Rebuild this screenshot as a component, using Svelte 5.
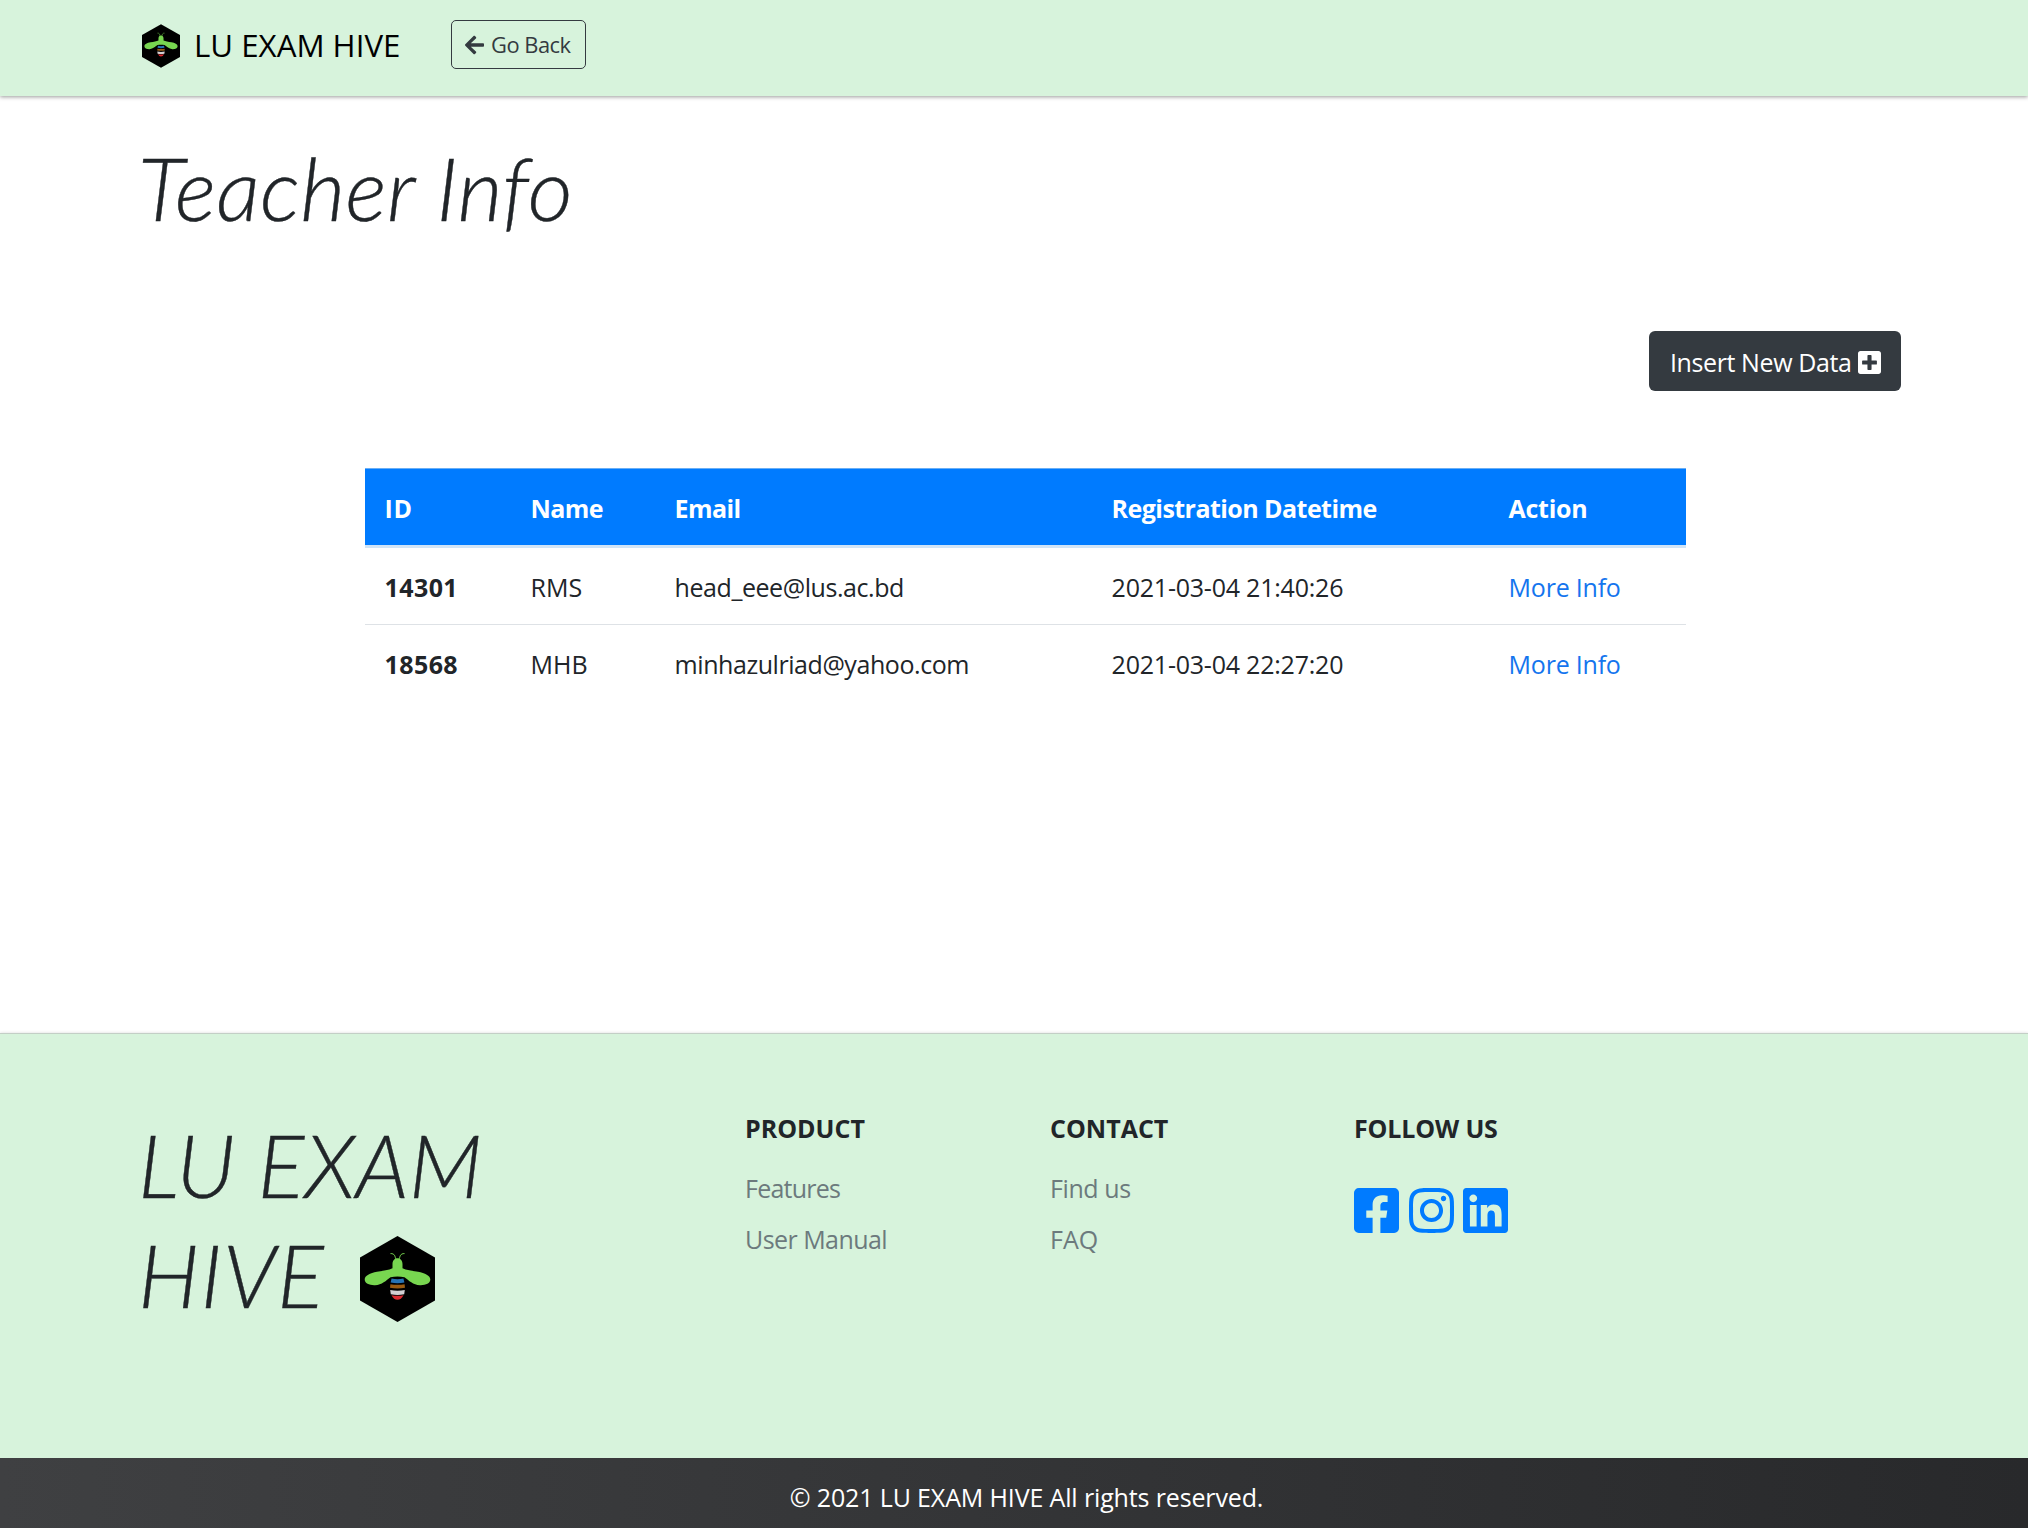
<script>
  const teachers = [
    { id: '14301', name: 'RMS', email: 'head_eee@lus.ac.bd', registered: '2021-03-04 21:40:26' },
    { id: '18568', name: 'MHB', email: 'minhazulriad@yahoo.com', registered: '2021-03-04 22:27:20' }
  ];
</script>

{#snippet bee()}
  <svg class="bee" viewBox="0 0 75 86" aria-hidden="true">
    <path d="M37.5 0 75 21.5V64.5L37.5 86 0 64.5V21.5Z" fill="#000" />
    <g fill="none" stroke="#78d650" stroke-width="1">
      <path d="M35.8 24C35.2 20 34.5 17.4 30.5 17.6" />
      <path d="M39.2 24C39.8 20 40.5 17.4 44.5 17.6" />
    </g>
    <path
      fill="#78d650"
      d="M37.5 22.3C40.7 22.3 42.4 25 42.5 28V32.2C46 34 52 34.6 58 35.8C65 37.2 70.3 39.5 70.3 43.6C70.3 47.5 65.5 49.4 60 49.2C53 48.8 49 44.5 44.500 41.2C40 40.4 35 40.4 30.5 41.2C26 44.5 22 48.8 15 49.2C9.500 49.4 4.700 47.5 4.700 43.6C4.700 39.5 10 37.2 17 35.8C23 34.6 29 34 32.5 32.2V28C32.6 25 34.3 22.3 37.5 22.3Z"
    />
    <path d="M31.6 42.600Q37.5 44 43.4 42.600L44.4 46.6Q37.5 47.8 30.6 46.6Z" fill="#2573b5" />
    <path d="M30.4 48.2Q37.5 49.4 44.6 48.2L45 51.8Q37.5 53.2 30 51.8Z" fill="#9a5c12" />
    <path d="M30.2 54Q37.5 55.4 44.8 54L44.2 58.2Q37.5 59.6 30.8 58.2Z" fill="#d2cfd2" />
    <path d="M31.5 59.2Q37.5 60.4 43.5 59.2Q41.2 63.8 37.5 63.8Q33.8 63.8 31.5 59.2Z" fill="#da2a30" />
  </svg>
{/snippet}

<div class="page">
  <header>
    <a class="brand" href="#home">{@render bee()}<span>LU EXAM HIVE</span></a>
    <a class="back" href="#back">
      <svg viewBox="0 0 448 512" aria-hidden="true"><path fill="currentColor" d="M257.5 445.1l-22.2 22.2c-9.4 9.4-24.6 9.4-33.9 0L7 273c-9.4-9.4-9.4-24.6 0-33.9L201.4 44.7c9.4-9.4 24.6-9.4 33.9 0l22.2 22.2c9.5 9.5 9.3 25-.4 34.3L136.6 216H424c13.3 0 24 10.7 24 24v32c0 13.3-10.7 24-24 24H136.6l120.5 114.8c9.8 9.3 10 24.8.4 34.3z" /></svg>
      <span>Go Back</span>
    </a>
  </header>

  <main>
    <h1>Teacher Info</h1>
    <div class="toolbar">
      <a class="insert" href="#insert">
        <span>Insert New Data</span>
        <svg viewBox="0 32 448 448" aria-hidden="true"><path fill="currentColor" d="M400 32H48C21.500 32 0 53.500 0 80v352c0 26.500 21.500 48 48 48h352c26.500 0 48-21.500 48-48V80c0-26.500-21.500-48-48-48zm-32 252c0 6.600-5.400 12-12 12h-92v92c0 6.600-5.400 12-12 12h-56c-6.600 0-12-5.400-12-12v-92H92c-6.600 0-12-5.400-12-12v-56c0-6.600 5.400-12 12-12h92v-92c0-6.600 5.400-12 12-12h56c6.600 0 12 5.400 12 12v92h92c6.600 0 12 5.400 12 12v56z" /></svg>
      </a>
    </div>
    <table>
      <thead>
        <tr>
          <th class="c-id">ID</th>
          <th class="c-name">Name</th>
          <th class="c-email">Email</th>
          <th class="c-date">Registration Datetime</th>
          <th class="c-action">Action</th>
        </tr>
      </thead>
      <tbody>
        {#each teachers as t}
          <tr>
            <td class="id">{t.id}</td>
            <td class="name">{t.name}</td>
            <td class="email">{t.email}</td>
            <td class="date">{t.registered}</td>
            <td class="more"><a href="#more">More Info</a></td>
          </tr>
        {/each}
      </tbody>
    </table>
  </main>

  <footer>
    <div class="columns">
      <div class="logo">
        <div>LU EXAM</div>
        <div class="second"><span>HIVE</span>{@render bee()}</div>
      </div>
      <nav>
        <h2>PRODUCT</h2>
        <a class="features" href="#features">Features</a>
        <a class="manual" href="#manual">User Manual</a>
      </nav>
      <nav>
        <h2>CONTACT</h2>
        <a class="find" href="#find">Find us</a>
        <a href="#faq">FAQ</a>
      </nav>
      <div class="follow">
        <h2>FOLLOW US</h2>
        <div class="social">
          <svg viewBox="0 32 448 448" role="img" aria-label="Facebook"><path fill="currentColor" d="M400 32H48A48 48 0 0 0 0 80v352a48 48 0 0 0 48 48h137.250V327.690h-63V256h63v-54.640c0-62.150 37-96.480 93.670-96.480 27.140 0 55.520 4.840 55.520 4.840v61h-31.270c-30.810 0-40.420 19.120-40.420 38.730V256h68.780l-11 71.690h-57.780V480H400a48 48 0 0 0 48-48V80a48 48 0 0 0-48-48z" /></svg>
          <svg viewBox="0 32 448 448" role="img" aria-label="Instagram"><path fill="currentColor" d="M224.100 141c-63.600 0-114.900 51.300-114.900 114.900s51.300 114.900 114.900 114.900S339 319.500 339 255.900 287.700 141 224.100 141zm0 189.600c-41.100 0-74.700-33.500-74.700-74.700s33.500-74.700 74.700-74.700 74.700 33.500 74.700 74.700-33.600 74.700-74.700 74.700zm146.400-194.300c0 14.900-12 26.800-26.800 26.800-14.900 0-26.800-12-26.800-26.800s12-26.800 26.800-26.800 26.800 12 26.800 26.800zm76.100 27.200c-1.700-35.900-9.900-67.700-36.200-93.900-26.200-26.200-58-34.400-93.900-36.200-37-2.100-147.900-2.100-184.900 0-35.800 1.700-67.600 9.900-93.900 36.100s-34.400 58-36.200 93.900c-2.100 37-2.100 147.900 0 184.900 1.700 35.900 9.900 67.700 36.200 93.900s58 34.400 93.900 36.200c37 2.100 147.900 2.100 184.900 0 35.900-1.700 67.700-9.900 93.900-36.200 26.200-26.200 34.400-58 36.200-93.900 2.100-37 2.100-147.800 0-184.800zM398.800 388c-7.800 19.600-22.900 34.700-42.600 42.600-29.500 11.700-99.500 9-132.100 9s-102.700 2.600-132.100-9c-19.600-7.800-34.700-22.900-42.600-42.600-11.700-29.500-9-99.500-9-132.100s-2.600-102.700 9-132.100c7.800-19.600 22.900-34.700 42.600-42.600 29.500-11.700 99.500-9 132.100-9s102.700-2.600 132.100 9c19.600 7.800 34.700 22.900 42.600 42.600 11.700 29.500 9 99.500 9 132.100s2.700 102.700-9 132.100z" /></svg>
          <svg viewBox="0 32 448 448" role="img" aria-label="LinkedIn"><path fill="currentColor" d="M416 32H31.900C14.300 32 0 46.500 0 64.300v383.400C0 465.500 14.300 480 31.900 480H416c17.600 0 32-14.500 32-32.300V64.300c0-17.800-14.400-32.300-32-32.300zM135.400 416H69V202.200h66.500V416zm-33.200-243c-21.300 0-38.500-17.300-38.500-38.500S80.900 96 102.200 96c21.200 0 38.500 17.300 38.500 38.500 0 21.300-17.200 38.500-38.500 38.500zm282.100 243h-66.400V312c0-24.800-.5-56.700-34.500-56.700-34.600 0-39.900 27-39.900 54.900V416h-66.400V202.200h63.700v29.200h.9c8.900-16.800 30.600-34.500 62.900-34.500 67.200 0 79.700 44.300 79.700 101.900V416z" /></svg>
        </div>
      </div>
    </div>
    <div class="copyright">© 2021 LU EXAM HIVE All rights reserved.</div>
  </footer>
</div>

<style>
  :global(body) { margin: 0; background: #fff; }
  .page {
    display: flex;
    flex-direction: column;
    height: 1528px;
    overflow: hidden;
    font: 25px/38px 'Open Sans', 'Noto Sans', sans-serif;
    color: #212529;
  }
  .page * { box-sizing: border-box; }
  a { color: inherit; text-decoration: none; }
  svg { display: block; flex: none; }

  header {
    display: flex;
    align-items: flex-start;
    height: 96px;
    padding: 20px 142px 0;
    background: #d7f3dc;
    box-shadow: 0 1px 4px rgba(0, 0, 0, 0.4);
    flex: none;
  }
  .brand { display: flex; width: 309px; color: #000; font-size: 31.25px; line-height: 48px; }
  .brand .bee { width: 38px; height: 44px; margin: 4px 14px 0 0; }
  .brand span { margin-top: 1px; }
  .back {
    display: flex;
    width: 135px;
    height: 49px;
    padding: 0 0 0 13px;
    border: 1px solid #343a40;
    border-radius: 5px;
    color: #343a40;
    font-size: 21.9px;
    line-height: 47px;
    letter-spacing: -0.5px;
  }
  .back svg { width: 19px; height: 22px; margin: 13px 7px 0 0; }

  main { display: flex; flex-direction: column; flex: none; height: 937px; padding: 39px 127px 0 138px; }
  h1, .logo { margin: 0; font: italic 300 87.5px/105px Lato, sans-serif; -webkit-text-stroke: 0.4px currentColor; }
  h1 { letter-spacing: 0.2px; }
  .toolbar { display: flex; justify-content: flex-end; margin-top: 91px; }
  .insert {
    display: flex;
    width: 252px;
    height: 60px;
    padding: 12px 0 0 21px;
    border-radius: 6px;
    background: #343a40;
    color: #fff;
    letter-spacing: -0.4px;
    white-space: nowrap;
  }
  .insert svg { width: 23px; height: 23px; margin: 8px 0 0 7px; }

  table {
    width: 1321px;
    margin: 77px 0 0 227px;
    table-layout: fixed;
    border-collapse: separate;
    border-spacing: 0;
  }
  th, td { padding: 20px 0 18px 19.6px; text-align: left; white-space: nowrap; line-height: 38px; vertical-align: top; }
  th {
    background: #007bff;
    background-clip: padding-box;
    border-top: 1px solid #69aef5;
    border-bottom: 3px solid #d0e4f7;
    color: #fff;
    font-weight: 700;
  }
  td { border-bottom: 1px solid #dee2e6; }
  tr:last-child td { border-bottom: 0; }
  .c-id { width: 146px; letter-spacing: 0.6px; }
  .c-name { width: 144px; letter-spacing: -0.6px; }
  .c-email { width: 437px; letter-spacing: -0.6px; }
  .c-date { width: 397px; letter-spacing: -0.55px; }
  .c-action { width: 197px; letter-spacing: -0.3px; }
  .id { font-weight: 700; letter-spacing: 0.4px; }
  .name { letter-spacing: 0; }
  .email { letter-spacing: -0.44px; }
  .date { letter-spacing: -0.22px; }
  .more { color: #1475ee; letter-spacing: -0.22px; }

  footer { display: flex; flex-direction: column; flex: 1; border-top: 1px solid #c3cfc6; background: #d7f3dc; box-shadow: 0 0 3px rgba(0, 0, 0, 0.15); }
  .columns { display: flex; height: 424px; padding: 75px 138px 0; }
  .logo { width: 607px; padding-top: 1px; line-height: 110px; }
  .second { display: flex; letter-spacing: 1px; }
  .second .bee { width: 75px; height: 86px; margin: 16px 0 0 35px; }
  nav { display: flex; flex-direction: column; width: 305px; }
  h2 { margin: 0 0 22px; font-size: 25px; line-height: 38px; font-weight: 700; }
  nav a { margin-bottom: 13px; color: #6c7a7d; }
  .features { letter-spacing: -0.75px; }
  .manual { letter-spacing: -0.55px; }
  .find { letter-spacing: -0.4px; }
  .follow { margin-left: -1px; }
  .follow h2 { letter-spacing: -0.15px; }
  .social { display: flex; gap: 9.5px; margin-top: 41px; color: #007bff; }
  .social svg { width: 45px; height: 45px; }
  .copyright {
    flex: 1;
    padding: 20px 0 0 25px;
    background: linear-gradient(90deg, #3f4042, #28292b);
    color: #fff;
    text-align: center;
    letter-spacing: -0.14px;
  }
</style>
